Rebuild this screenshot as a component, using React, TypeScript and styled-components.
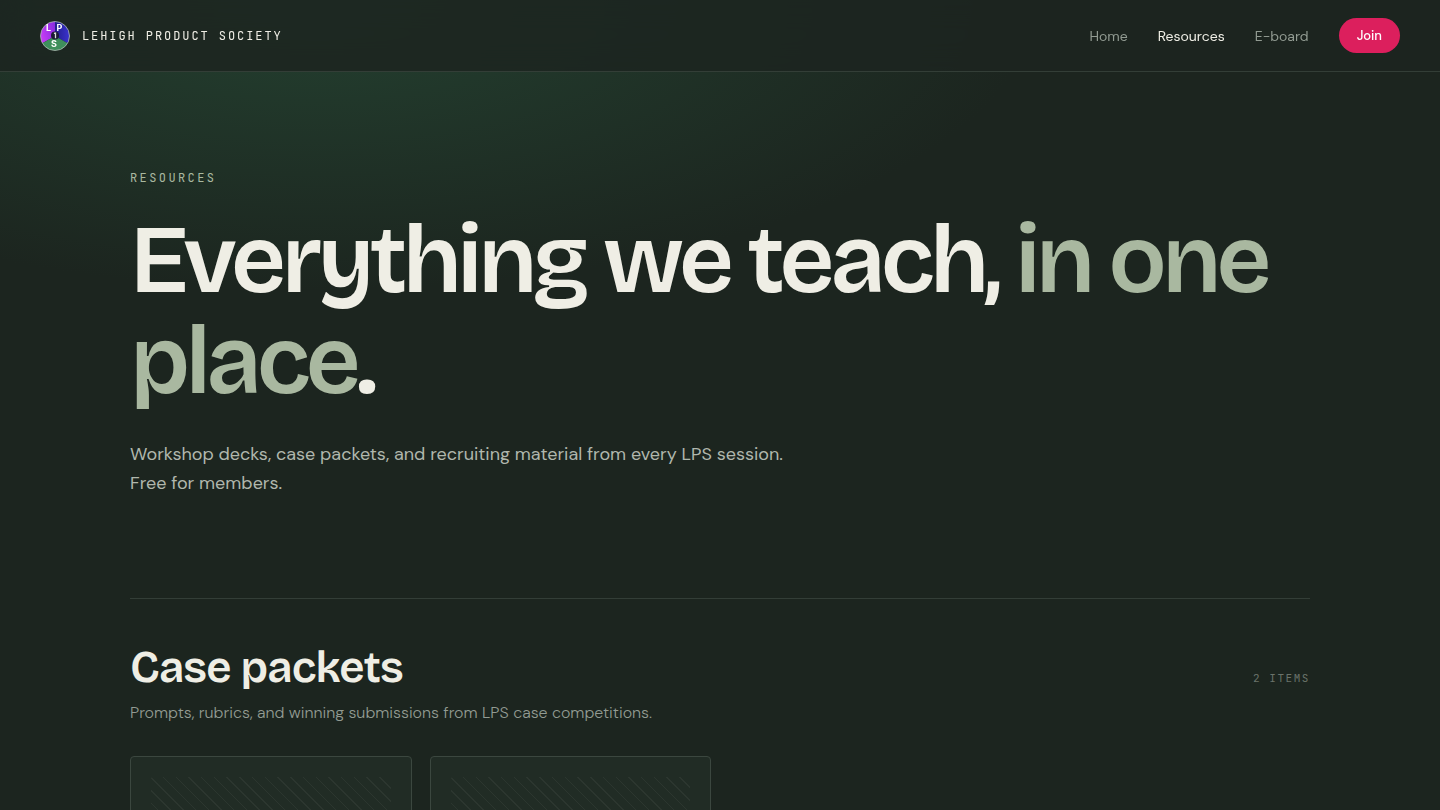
import React from "react";
import styled, { createGlobalStyle } from "styled-components";

const color = {
  bg: "#1c251f",
  cream: "#efeee5",
  sage: "#a9b8a0",
  soft: "#b0b7ad",
  muted: "#929b92",
  dim: "#6a736a",
  line: "#333e37",
  cardLine: "#3b473f",
  card: "#212c25",
  pink: "#dc1f5d",
};

const font = {
  display: '"Bricolage Grotesque", "Inter", "Liberation Sans", sans-serif',
  body: '"DM Sans", "Inter", "Liberation Sans", sans-serif',
  mono: '"JetBrains Mono", "Liberation Mono", monospace',
};

const GlobalStyle = createGlobalStyle`
  *, *::before, *::after { box-sizing: border-box; }
  body {
    margin: 0;
    background:
      radial-gradient(ellipse 50% 290px at 22% 0, rgba(36, 66, 49, 0.95), rgba(36, 66, 49, 0) 100%) no-repeat,
      ${color.bg};
    color: ${color.cream};
    font-family: ${font.body};
    font-size: 16px;
    line-height: 24px;
    -webkit-font-smoothing: antialiased;
  }
`;

const Header = styled.header`
  position: sticky;
  top: 0;
  z-index: 10;
  display: flex;
  align-items: center;
  justify-content: space-between;
  padding: 18px 40px;
  background: rgba(28, 37, 32, 0.85);
  border-bottom: 1px solid ${color.line};
  backdrop-filter: blur(14px);
`;

const Brand = styled.a`
  display: flex;
  align-items: center;
  gap: 12px;
  color: ${color.cream};
  font-family: ${font.mono};
  font-size: 12px;
  line-height: 20px;
  letter-spacing: 0.16em;
  text-transform: uppercase;
  text-decoration: none;
`;

const Nav = styled.nav`
  display: flex;
  align-items: center;
  gap: 30px;
`;

const NavLink = styled.a<{ $active?: boolean }>`
  color: ${(p) => (p.$active ? color.cream : color.muted)};
  font-size: 14px;
  line-height: 20px;
  text-decoration: none;
`;

const JoinButton = styled.button`
  padding: 8px 18px;
  border: 0;
  border-radius: 999px;
  background: ${color.pink};
  color: #fff;
  font-family: ${font.body};
  font-size: 13px;
  font-weight: 500;
  line-height: 19px;
  cursor: pointer;
`;

const Container = styled.main`
  max-width: 1260px;
  margin: 0 auto;
  padding: 0 40px 80px;
`;

const Hero = styled.section`
  padding: 96px 0 100px;
`;

const Eyebrow = styled.p`
  margin: 0 0 22px;
  color: ${color.sage};
  font-family: ${font.mono};
  font-size: 12px;
  line-height: 20px;
  letter-spacing: 0.2em;
  text-transform: uppercase;
`;

const Title = styled.h1`
  margin: 0 0 28px;
  font-family: ${font.display};
  font-size: 96px;
  font-weight: 600;
  line-height: 101px;
  letter-spacing: -0.05em;
`;

const Accent = styled.span`
  color: ${color.sage};
`;

const Lead = styled.p`
  max-width: 680px;
  margin: 0;
  color: ${color.soft};
  font-size: 18px;
  line-height: 29px;
`;

const Section = styled.section`
  padding-top: 45px;
  border-top: 1px solid ${color.line};
`;

const SectionHead = styled.div`
  display: flex;
  align-items: baseline;
  justify-content: space-between;
`;

const SectionTitle = styled.h2`
  margin: 0;
  font-family: ${font.display};
  font-size: 44px;
  font-weight: 600;
  line-height: 48px;
  letter-spacing: -0.02em;
`;

const Count = styled.span`
  color: ${color.dim};
  font-family: ${font.mono};
  font-size: 11px;
  line-height: 16px;
  letter-spacing: 0.14em;
  text-transform: uppercase;
`;

const SectionText = styled.p`
  margin: 9px 0 31px;
  color: ${color.muted};
  font-size: 16px;
  font-weight: 300;
  line-height: 24px;
`;

const CardGrid = styled.div`
  display: grid;
  grid-template-columns: repeat(auto-fill, minmax(260px, 1fr));
  gap: 18px;
`;

const Card = styled.article`
  padding: 20px;
  border: 1px solid ${color.cardLine};
  border-radius: 4px;
  background: ${color.card};
`;

const Thumb = styled.div`
  height: 140px;
  border-radius: 2px;
  background: repeating-linear-gradient(
    45deg,
    transparent 0 8px,
    rgba(240, 237, 229, 0.05) 8px 9px
  );
`;

const LogoMark = styled.svg`
  width: 30px;
  height: 30px;
  flex: none;
`;

function Logo() {
  return (
    <LogoMark viewBox="0 0 30 30" aria-hidden="true">
      <defs>
        <linearGradient id="violet" x1="0" x2="1" y1="0.6" y2="0.2">
          <stop offset="0" stopColor="#c63df5" />
          <stop offset="1" stopColor="#8a2be0" />
        </linearGradient>
        <linearGradient id="indigo" x1="0" x2="1">
          <stop offset="0" stopColor="#241f8c" />
          <stop offset="1" stopColor="#3a32cf" />
        </linearGradient>
      </defs>
      <path d="M15 15V0.5A14.5 14.5 0 0 0 2.4 22.2Z" fill="url(#violet)" />
      <path d="M15 15V0.5A14.5 14.5 0 0 1 27.6 22.2Z" fill="url(#indigo)" />
      <path d="M15 15L2.4 22.2A14.5 14.5 0 0 0 27.6 22.2Z" fill="#3f8f5c" />
      <circle cx="15" cy="15" r="14.5" fill="none" stroke="#aebbb4" strokeWidth="0.8" />
      <circle cx="15" cy="14.5" r="4" fill="#1c1b33" />
      <path d="M13.9 12.4L15.5 12V17.2" fill="none" stroke="#d9dcd9" strokeWidth="1.3" />
      <g fill="#fff" fontFamily="Inter, sans-serif" fontSize="9" fontWeight="700" textAnchor="middle">
        <text x="9.5" y="10.3">L</text>
        <text x="20.3" y="10.3">P</text>
        <text x="15" y="26">S</text>
      </g>
    </LogoMark>
  );
}

const packets = ["first", "second"];

export default function App() {
  return (
    <>
      <GlobalStyle />
      <Header>
        <Brand href="#">
          <Logo />
          Lehigh Product Society
        </Brand>
        <Nav>
          <NavLink href="#">Home</NavLink>
          <NavLink href="#" $active aria-current="page">
            Resources
          </NavLink>
          <NavLink href="#">E-board</NavLink>
          <JoinButton type="button">Join</JoinButton>
        </Nav>
      </Header>
      <Container>
        <Hero>
          <Eyebrow>Resources</Eyebrow>
          <Title>
            Everything we teach, <Accent>in one place</Accent>.
          </Title>
          <Lead>
            Workshop decks, case packets, and recruiting material from every LPS session. Free for members.
          </Lead>
        </Hero>
        <Section>
          <SectionHead>
            <SectionTitle>Case packets</SectionTitle>
            <Count>2 items</Count>
          </SectionHead>
          <SectionText>Prompts, rubrics, and winning submissions from LPS case competitions.</SectionText>
          <CardGrid>
            {packets.map((id) => (
              <Card key={id}>
                <Thumb />
              </Card>
            ))}
          </CardGrid>
        </Section>
      </Container>
    </>
  );
}
